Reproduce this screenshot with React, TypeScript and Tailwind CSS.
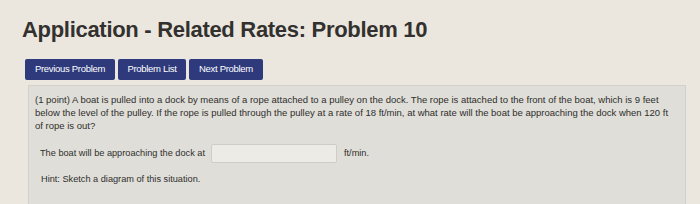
export default function App() {
  return (
    <div className="w-[700px] h-[204px] overflow-hidden bg-[#ebe7de] font-['Liberation_Sans',Arial,sans-serif]">
      <div className="pl-[22px] pt-[17px]">
        <h1 className="text-[22px] leading-[26px] font-bold text-[#33312f] tracking-[-0.3px]">
          Application - Related Rates: Problem 10
        </h1>
        <div className="flex gap-[3px] mt-[16px] ml-[3px]">
          <button className="h-[21px] w-[90px] rounded-[2px] bg-[#2e3a7c] text-white text-[9.5px] tracking-[-0.3px]">
            Previous Problem
          </button>
          <button className="h-[21px] w-[68px] rounded-[2px] bg-[#2e3a7c] text-white text-[9.5px] tracking-[-0.3px]">
            Problem List
          </button>
          <button className="h-[21px] w-[74px] rounded-[2px] bg-[#2e3a7c] text-white text-[9.5px] tracking-[-0.3px]">
            Next Problem
          </button>
        </div>
        <div className="mt-[5px] ml-[6px] w-[658px] h-[120px] border border-[#d3d1cb] bg-[#dfded9] px-[6px] pt-[7px] text-[#302e2b] leading-[13px]">
          <p className="w-[640px] text-[9.5px]">
            (1 point) A boat is pulled into a dock by means of a rope attached to a pulley on the dock. The rope is attached to the front of the boat, which is 9 feet below the level of the pulley. If the rope is pulled through the pulley at a rate of 18 ft/min, at what rate will the boat be approaching the dock when 120 ft of rope is out?
          </p>
          <div className="flex items-center mt-[12px] ml-[5px] text-[9.2px]">
            <span>The boat will be approaching the dock at</span>
            <input className="ml-[6px] w-[126px] h-[19px] bg-[#ecebe6] border border-[#cfcdc7] rounded-[2px]" />
            <span className="ml-[7px]">ft/min.</span>
          </div>
          <p className="mt-[10px] ml-[6px] text-[9.2px]">Hint: Sketch a diagram of this situation.</p>
        </div>
      </div>
    </div>
  );
}
